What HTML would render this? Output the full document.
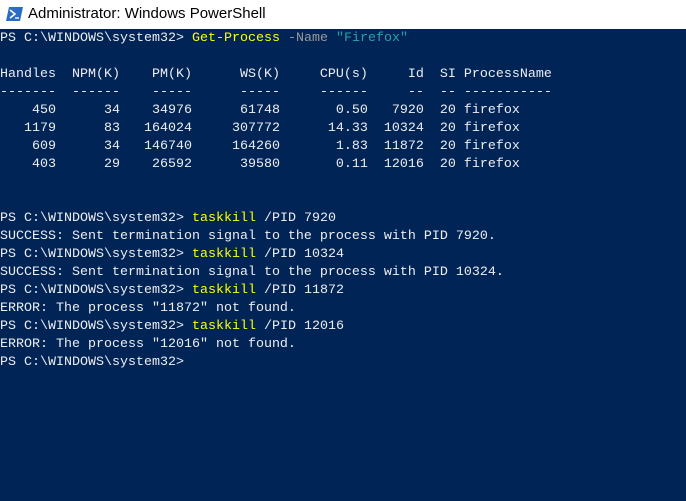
<!DOCTYPE html>
<html><head><style>
body{margin:0;width:686px;height:501px;overflow:hidden;background:#012456;}
.t{height:29px;background:#fff;position:relative;font-family:"Liberation Sans",sans-serif;font-size:15px;color:#000;}
.t span{position:absolute;left:28px;top:5px;}
pre{margin:0;padding:0;position:absolute;top:30px;left:0;font-family:"Liberation Mono",monospace;font-size:13.33px;line-height:18px;color:#eeedf0;}
.y{color:#ffff00}.g{color:#9a9a9a}.c{color:#2aa0a8}
</style></head><body>
<div class="t"><svg style="position:absolute;left:6px;top:7px" width="17" height="14"><polygon points="3,0 17,0 14,14 0,14" fill="#2b6cc4"/><polyline points="4,3 9,7 4,11" stroke="#fff" stroke-width="1.6" fill="none"/><line x1="9" y1="11" x2="13" y2="11" stroke="#fff" stroke-width="1.4"/></svg><span>Administrator: Windows PowerShell</span></div>
<pre>PS C:\WINDOWS\system32&gt; <span class="y">Get-Process</span> <span class="g">-Name</span> <span class="c">"Firefox"</span>

Handles  NPM(K)    PM(K)      WS(K)     CPU(s)     Id  SI ProcessName
-------  ------    -----      -----     ------     --  -- -----------
    450      34    34976      61748       0.50   7920  20 firefox
   1179      83   164024     307772      14.33  10324  20 firefox
    609      34   146740     164260       1.83  11872  20 firefox
    403      29    26592      39580       0.11  12016  20 firefox


PS C:\WINDOWS\system32&gt; <span class="y">taskkill</span> /PID 7920
SUCCESS: Sent termination signal to the process with PID 7920.
PS C:\WINDOWS\system32&gt; <span class="y">taskkill</span> /PID 10324
SUCCESS: Sent termination signal to the process with PID 10324.
PS C:\WINDOWS\system32&gt; <span class="y">taskkill</span> /PID 11872
ERROR: The process "11872" not found.
PS C:\WINDOWS\system32&gt; <span class="y">taskkill</span> /PID 12016
ERROR: The process "12016" not found.
PS C:\WINDOWS\system32&gt;</pre>
</body></html>
